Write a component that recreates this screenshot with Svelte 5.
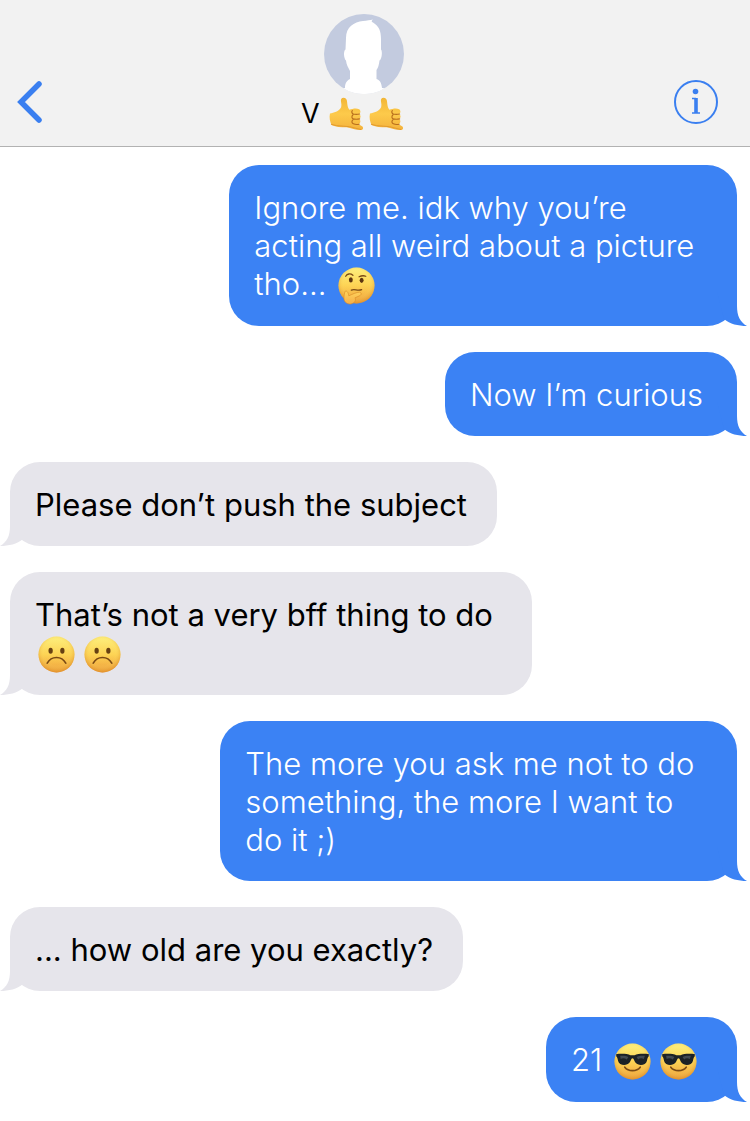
<script lang="ts">
    type Message = { text: string; sender: 'me' | 'them' };

    const contact = 'V 🤙🤙';

    const messages: Message[] = [
        { text: 'Ignore me. idk why you’re \nacting all weird about a picture \ntho... 🤔', sender: 'me' },
        { text: 'Now I’m curious', sender: 'me' },
        { text: 'Please don’t push the subject', sender: 'them' },
        { text: 'That’s not a very bff thing to do \n🙁🙁', sender: 'them' },
        { text: 'The more you ask me not to do \nsomething, the more I want to \ndo it ;)', sender: 'me' },
        { text: '... how old are you exactly?', sender: 'them' },
        { text: '21 😎😎', sender: 'me' },
    ];

    const labels: Record<string, string> = {
        '🤙': 'call me hand',
        '🤔': 'thinking face',
        '🙁': 'frowning face',
        '😎': 'face with sunglasses',
    };

    // keeps the emoji in the result so each one can be drawn
    function split(text: string) {
        return text.split(/(🤙|🤔|🙁|😎)/u).filter((part) => part !== '');
    }
</script>

{#snippet emoji(char)}
    <svg class="emoji" viewBox="0 0 36 36" role="img" aria-label={labels[char]}>
        {#if char === '🤙'}
            <path fill="url(#skin)" d="M1 17C5 16 10 15 12.500 10.500C13.500 7 11.500 4 12.500 2C14 0 18 .5 18.500 4C19 8 19 11 21 13C24 12 28 11 31 12.500C33 14 32.500 16.500 31 17.500C33 19 33 21.500 31 22.500C33 24 32.500 27 30.500 28L34 30C36 31.500 35 34 32.500 34C27 33.500 23 32 18 31C12 31 7 31 3 29C1 26 0 21 1 17Z" />
            <path class="crease" d="M25 17.500C27 18 29 18 31.500 17.500M25 22.500C27 23 29 23 31.500 22.500M25 27.500C27 28.500 28.500 28.500 31 28M24 14C23 15 23.500 17 25 17.500M24.500 18.500C23 20 23.500 22 25 22.500M24.500 23.500C23 25 23.500 27 25 27.500" />
            <path fill="none" stroke="#e29a2d" stroke-width="1" d="M2 28C9 31 20 29 27 32L33 33.500" />
        {:else}
            <circle cx="18" cy="18" r="17.500" fill="url(#face)" />
            <circle cx="18" cy="18" r="17.500" fill="url(#shine)" />
        {/if}
        {#if char === '🤔'}
            <ellipse cx="12.500" cy="12.500" rx="1.900" ry="2.600" fill="#5d3510" />
            <ellipse cx="23" cy="13" rx="1.900" ry="2.600" fill="#5d3510" />
            <path class="line" d="M7.500 9C9 6.500 12 6 14.500 8M20.500 9.500C22.500 8.500 24.500 8 27 9" />
            <path class="line" d="M13 22.500C16 21 19 23.500 23 22" />
            <path fill="url(#thumb)" stroke="#d98a25" stroke-width=".6" d="M7 23.500C9 23 10 25 10.500 28C14 26.500 18 24.500 21 24.500C23 25 23 27 21 28L16.500 30C18 32 16 35.500 12.500 36C9 36.500 6 34 5.800 31C5.800 28 6 26 7 23.500Z" />
        {:else if char === '🙁'}
            <ellipse cx="12.300" cy="14.300" rx="2.100" ry="2.900" fill="#674012" />
            <ellipse cx="23.700" cy="14.300" rx="2.100" ry="2.900" fill="#674012" />
            <path class="line mouth" d="M9 26.500C13 19 23 19 27 26.500" />
        {:else if char === '😎'}
            <path fill="#1c2226" d="M2 11C7 10.200 13 10.500 16 12H20C23 10.500 29 10.200 34 11L33.700 13.200C32.700 14 32.500 15.500 32 17.500C31 22 23.500 22.500 20.800 19C19.600 17.500 19.500 15 18 14.800C16.500 15 16.400 17.500 15.200 19C12.500 22.500 5 22 4 17.500C3.500 15.500 3.300 14 2.300 13.200Z" />
            <path fill="#5b666e" opacity=".6" d="M6 12.500C9 12 12 12.500 14 13.500L12.500 16C10.500 14.500 8 14.500 6.500 15.500ZM22 13.500C24 12.500 27 12 30 12.500L29 15.500C27 14.500 25 14.500 23.500 16Z" />
            <path class="line mouth" d="M10.500 23.500C14 28 22 28 25.500 23.500" />
        {/if}
    </svg>
{/snippet}

{#snippet rich(text)}
    {#each split(text) as part}{#if labels[part]}{@render emoji(part)}{:else}{part}{/if}{/each}
{/snippet}

<svg class="defs" aria-hidden="true">
    <defs>
        <linearGradient id="face" x1="0" y1="0" x2="0" y2="1">
            <stop offset="0" stop-color="#fdf07e" />
            <stop offset=".5" stop-color="#fdd050" />
            <stop offset="1" stop-color="#ec9434" />
        </linearGradient>
        <radialGradient id="shine" cx=".5" cy=".44" r=".58">
            <stop offset=".6" stop-color="#fff07a" stop-opacity=".1" />
            <stop offset="1" stop-color="#d9831c" stop-opacity=".7" />
        </radialGradient>
        <linearGradient id="skin" x1="0" y1="0" x2="0" y2="1">
            <stop offset="0" stop-color="#f2b637" />
            <stop offset=".5" stop-color="#fdca4b" />
            <stop offset="1" stop-color="#f4b23c" />
        </linearGradient>
        <linearGradient id="thumb" x1="0" y1="0" x2="0" y2="1">
            <stop offset="0" stop-color="#ffd45c" />
            <stop offset="1" stop-color="#f5ae48" />
        </linearGradient>
    </defs>
</svg>

<div class="phone">
    <header>
        <button class="back" aria-label="Back">
            <svg viewBox="0 0 26 44" width="26" height="44">
                <path d="M22 4L4 22L22 40" fill="none" stroke="#3a7ff0" stroke-width="5.500" stroke-linecap="round" />
            </svg>
        </button>

        <div class="contact">
            <svg class="avatar" viewBox="0 0 80 80" aria-hidden="true">
                <clipPath id="round"><circle cx="40" cy="40" r="40" /></clipPath>
                <g clip-path="url(#round)">
                    <rect width="80" height="80" fill="#c3cbdf" />
                    <path fill="#fff" d="M22 24C22 13 30 8 39 7C43 6.500 46 6 49 5.500C47 7 47.500 8 49 8.500C55 12 57 17 57 25V35.500C58.500 37 58 45 55.500 46.500C55 51 54 54 52.500 56V65C56 66 57.500 69 58 74L70 80H10L21 74C21 70 22 67 26 65V57C24 53 22.500 51 22 46.500C20 45 19 37 21.500 35.500Z" />
                    <path fill="#fff" d="M0 74H80V80H0Z" />
                </g>
            </svg>
            <h1>{@render rich(contact)}</h1>
        </div>

        <button class="info" aria-label="Details">
            <svg viewBox="0 0 44 44" width="44" height="44" fill="none" stroke="#3a7ff0">
                <circle cx="22" cy="22" r="21" stroke-width="2" />
                <circle cx="21.500" cy="11.500" r="2.800" fill="#3a7ff0" stroke="none" />
                <path d="M22 18V33" stroke-width="3.600" />
                <path d="M18 18.500H22M18 33H26" stroke-width="1.600" />
            </svg>
        </button>
    </header>

    <main>
        {#each messages as message}
            <div class="message {message.sender}">
                <p>{@render rich(message.text)}</p>
                <svg class="tail" viewBox="0 0 30 34" aria-hidden="true">
                    <path d="M0 0H20V14C20 24 23 30 30 34C21 34 13 32 7 27Z" />
                </svg>
            </div>
        {/each}
    </main>
</div>

<style>
    :global(body) {
        margin: 0;
        background: #fff;
    }

    .defs {
        position: absolute;
        width: 0;
        height: 0;
    }

    .phone {
        font-family: Inter, "Liberation Sans", sans-serif;
        color: #000;
    }

    header {
        display: grid;
        grid-template-columns: 1fr auto 1fr;
        align-items: end;
        padding: 14px 32px 12px 10px;
        background: #f2f2f2;
        border-bottom: 1px solid #b2b2b2;
    }

    button {
        display: flex;
        padding: 0;
        border: none;
        background: none;
        cursor: pointer;
    }

    .back {
        justify-self: start;
        margin: 0 0 10px 7px;
    }

    .info {
        justify-self: end;
        margin-bottom: 10px;
    }

    .contact {
        display: flex;
        flex-direction: column;
        align-items: center;
    }

    .avatar {
        width: 80px;
        height: 80px;
    }

    h1 {
        margin: 0;
        padding-right: 20px;
        font-size: 27px;
        font-weight: 400;
        line-height: 40px;
        white-space: nowrap;
    }

    .emoji {
        width: 37px;
        height: 37px;
        margin: 0 6px 0 3px;
        vertical-align: -9px;
        overflow: visible;
    }

    h1 .emoji {
        width: 35px;
        height: 35px;
        margin: 0 3px 0 2px;
        vertical-align: -9px;
    }

    .line {
        fill: none;
        stroke: #7a4a14;
        stroke-width: 1.3;
        stroke-linecap: round;
    }

    .mouth {
        stroke-width: 1.6;
    }

    .crease {
        fill: none;
        stroke: #b96f1d;
        stroke-width: 1.2;
        stroke-linecap: round;
    }

    main {
        display: flex;
        flex-direction: column;
        gap: 26px;
        padding: 18px 13px 18px 10px;
    }

    .message {
        position: relative;
        box-sizing: border-box;
        max-width: 80%;
        padding: 24px 34px 22px 25px;
        border-radius: 30px;
    }

    .message p {
        margin: 0;
        font-size: 31px;
        line-height: 38px;
        white-space: break-spaces;
    }

    .me {
        align-self: flex-end;
        background: #3b82f4;
        color: #fff;
        font-weight: 300;
    }

    .them {
        align-self: flex-start;
        padding-right: 30px;
        background: #e6e5eb;
    }

    .tail {
        position: absolute;
        right: -10px;
        bottom: 0;
        width: 30px;
        height: 34px;
        fill: #3b82f4;
    }

    .them .tail {
        right: auto;
        left: -10px;
        fill: #e6e5eb;
        transform: scaleX(-1);
    }
</style>
